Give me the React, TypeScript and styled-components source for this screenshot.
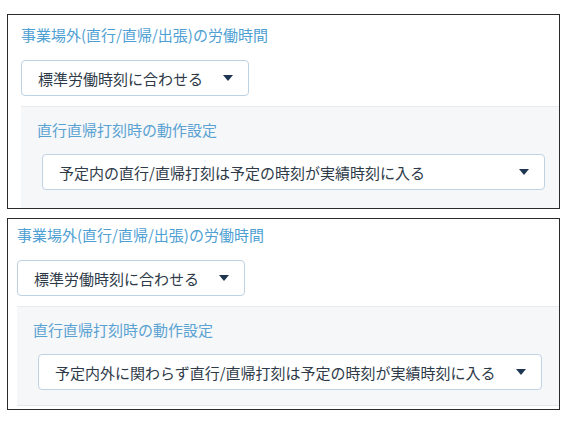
import React from "react";
import styled, { createGlobalStyle } from "styled-components";

const GlobalStyle = createGlobalStyle`
  body {
    margin: 0;
    background: #ffffff;
    font-family: "Noto Sans CJK JP", "Noto Sans", sans-serif;
  }
`;

const Page = styled.div`
  display: flex;
  flex-direction: column;
  gap: 9px;
  padding: 14px 0 0 7px;
  width: 553px;
`;

const Panel = styled.section<{ $inset: number; $top: number; $bottom: number }>`
  border: 1px solid #2b2b2b;
  padding: ${(p) => p.$top}px 0 ${(p) => p.$bottom}px ${(p) => p.$inset}px;
  background: #ffffff;
`;

const Title = styled.div`
  font-size: 15px;
  line-height: 22px;
  color: #4f9fd3;
  margin-bottom: 14px;
`;

const Select = styled.div<{ $minWidth?: number }>`
  display: inline-flex;
  align-items: center;
  justify-content: space-between;
  gap: 20px;
  box-sizing: border-box;
  height: 36px;
  min-width: ${(p) => (p.$minWidth ? `${p.$minWidth}px` : "0")};
  padding: 0 15px 0 16px;
  border: 1px solid #bfd2e2;
  border-radius: 4px;
  background: #ffffff;
  font-size: 15px;
  color: #2e3a48;
  white-space: nowrap;
`;

const Caret = styled.span`
  flex: none;
  width: 0;
  height: 0;
  border-left: 5.5px solid transparent;
  border-right: 5.5px solid transparent;
  border-top: 6px solid #1f3652;
`;

const SubSection = styled.div<{ $bottom: number; $line: boolean }>`
  margin-top: 10px;
  background: #f5f7f9;
  border-top: 1px solid #e8ecef;
  border-bottom: ${(p) => (p.$line ? "1px solid #e3e7ea" : "none")};
  padding: 12px 0 ${(p) => p.$bottom}px 16px;
`;

const SubTitle = styled.div`
  font-size: 15px;
  line-height: 22px;
  color: #5aa2d2;
  margin-bottom: 13px;
`;

const Indent = styled.div`
  padding-left: 5px;
`;

type SettingProps = {
  inset: number;
  top: number;
  bottom: number;
  subBottom: number;
  line: boolean;
  action: string;
};

const Setting = ({ inset, top, bottom, subBottom, line, action }: SettingProps) => (
  <Panel $inset={inset} $top={top} $bottom={bottom}>
    <Title>事業場外(直行/直帰/出張)の労働時間</Title>
    <Select>
      <span>標準労働時刻に合わせる</span>
      <Caret />
    </Select>
    <SubSection $bottom={subBottom} $line={line}>
      <SubTitle>直行直帰打刻時の動作設定</SubTitle>
      <Indent>
        <Select $minWidth={503}>
          <span>{action}</span>
          <Caret />
        </Select>
      </Indent>
    </SubSection>
  </Panel>
);

const App = () => {
  return (
    <>
      <GlobalStyle />
      <Page>
        <Setting
          inset={13}
          top={9}
          bottom={0}
          subBottom={18}
          line={false}
          action="予定内の直行/直帰打刻は予定の時刻が実績時刻に入る"
        />
        <Setting
          inset={9}
          top={5}
          bottom={3}
          subBottom={15}
          line={true}
          action="予定内外に関わらず直行/直帰打刻は予定の時刻が実績時刻に入る"
        />
      </Page>
    </>
  );
};

export default App;
